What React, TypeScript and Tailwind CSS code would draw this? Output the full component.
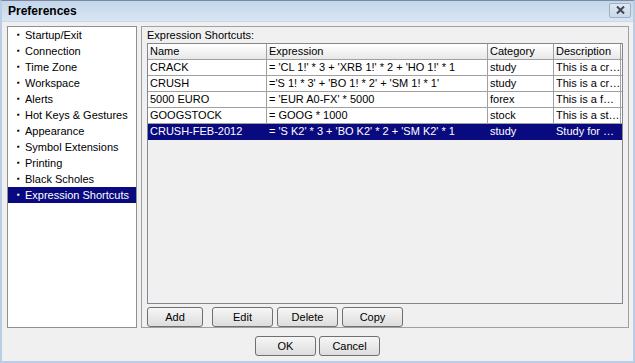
import React from 'react';

const NAV = [
  'Startup/Exit',
  'Connection',
  'Time Zone',
  'Workspace',
  'Alerts',
  'Hot Keys & Gestures',
  'Appearance',
  'Symbol Extensions',
  'Printing',
  'Black Scholes',
  'Expression Shortcuts',
];

const ROWS = [
  { name: 'CRACK', expr: "= 'CL 1!' * 3 + 'XRB 1!' * 2 + 'HO 1!' * 1", cat: 'study', desc: 'This is a cr…' },
  { name: 'CRUSH', expr: "='S 1! * 3' + 'BO 1! * 2' + 'SM 1! * 1'", cat: 'study', desc: 'This is a cr…' },
  { name: '5000 EURO', expr: "= 'EUR A0-FX' * 5000", cat: 'forex', desc: 'This is a f…' },
  { name: 'GOOGSTOCK', expr: '= GOOG * 1000', cat: 'stock', desc: 'This is a st…' },
  { name: 'CRUSH-FEB-2012', expr: "= 'S K2' * 3 + 'BO K2' * 2 + 'SM K2' * 1", cat: 'study', desc: 'Study for …', selected: true },
];

const font = { fontFamily: '"Liberation Sans", Arial, sans-serif' };

function WinButton({ label, className }: { label: string; className: string }) {
  return (
    <button
      type="button"
      className={`h-[20px] rounded-[3px] border border-[#707070] bg-gradient-to-b from-[#f6f6f6] to-[#dddddd] text-[11px] text-black leading-none ${className}`}
    >
      {label}
    </button>
  );
}

export default function App() {
  return (
    <div
      style={font}
      className="w-[635px] h-[363px] flex flex-col bg-[#f0f0f0] border-t border-t-[#7a8a9c] border-x-2 border-x-[#b9cde4] border-b-2 border-b-[#b9cde4] text-black overflow-hidden"
    >
      {/* title bar */}
      <div className="h-[21px] shrink-0 flex items-center justify-between pl-[6px] pr-[2px] bg-gradient-to-b from-[#c3d6ec] to-[#d9e5f2] border-b border-[#c9d7e6]">
        <span className="text-[12px] font-bold">Preferences</span>
        <div className="w-[22px] h-[15px] mt-[-2px] flex items-center justify-center rounded-[2px] border border-[#9fb1c6] bg-gradient-to-b from-[#dfe8f2] to-[#cbd8e7]">
          <svg width="9" height="8" viewBox="0 0 9 8">
            <path d="M1 0.5 L8 7.5 M8 0.5 L1 7.5" stroke="#3c4656" strokeWidth="2" />
          </svg>
        </div>
      </div>

      {/* content */}
      <div className="flex gap-[4px] pl-[5px] pt-[4px]">
        <div className="w-[130px] h-[302px] shrink-0 bg-white border border-[#8e8f8f] py-[0px]">
          {NAV.map((item) => {
            const active = item === 'Expression Shortcuts';
            return (
              <div
                key={item}
                className={`h-[16px] flex items-center text-[11px] whitespace-nowrap ${active ? 'bg-[#0a0a80] text-white' : ''}`}
              >
                <span className="w-[17px] pl-[9px] text-[8px]">▪</span>
                <span>{item}</span>
              </div>
            );
          })}
        </div>

        <div className="w-[488px] h-[302px] border border-[#a0a0a0] flex flex-col px-[5px]">
          <div className="h-[15px] mt-[1px] text-[11px] leading-[15px]">Expression Shortcuts:</div>
          <div className="h-[261px] border border-[#828790] bg-[#f0f0f0] flex flex-col">
            <div className="flex h-[16px] bg-gradient-to-b from-[#ffffff] to-[#e8e8e8] border-b border-[#a0a0a0] text-[11px]">
              <div className="w-[119px] pl-[2px] border-r border-[#a0a0a0] leading-[15px]">Name</div>
              <div className="w-[221px] pl-[2px] border-r border-[#a0a0a0] leading-[15px]">Expression</div>
              <div className="w-[66px] pl-[2px] border-r border-[#a0a0a0] leading-[15px]">Category</div>
              <div className="w-[67px] pl-[2px] border-r border-[#a0a0a0] leading-[15px]">Description</div>
            </div>
            {ROWS.map((r) => (
              <div
                key={r.name}
                className={`flex h-[16px] border-b text-[11px] whitespace-nowrap ${
                  r.selected ? 'bg-[#0a0a80] text-white border-[#0a0a80]' : 'bg-white border-[#a0a0a0]'
                }`}
              >
                <div className={`w-[119px] pl-[2px] leading-[15px] overflow-hidden ${r.selected ? '' : 'border-r border-[#a0a0a0]'}`}>{r.name}</div>
                <div className={`w-[221px] pl-[2px] leading-[15px] overflow-hidden ${r.selected ? '' : 'border-r border-[#a0a0a0]'}`}>{r.expr}</div>
                <div className={`w-[66px] pl-[2px] leading-[15px] overflow-hidden ${r.selected ? '' : 'border-r border-[#a0a0a0]'}`}>{r.cat}</div>
                <div className={`w-[67px] pl-[2px] leading-[15px] overflow-hidden ${r.selected ? '' : 'border-r border-[#a0a0a0]'}`}>{r.desc}</div>
              </div>
            ))}
          </div>
          <div className="flex mt-[3px]">
            <WinButton label="Add" className="w-[56px]" />
            <WinButton label="Edit" className="w-[61px] ml-[9px]" />
            <WinButton label="Delete" className="w-[61px] ml-[4px]" />
            <WinButton label="Copy" className="w-[61px] ml-[4px]" />
          </div>
        </div>
      </div>

      <div className="flex justify-center gap-[3px] mt-[8px] pr-[0px]">
        <WinButton label="OK" className="w-[61px]" />
        <WinButton label="Cancel" className="w-[61px]" />
      </div>
    </div>
  );
}
